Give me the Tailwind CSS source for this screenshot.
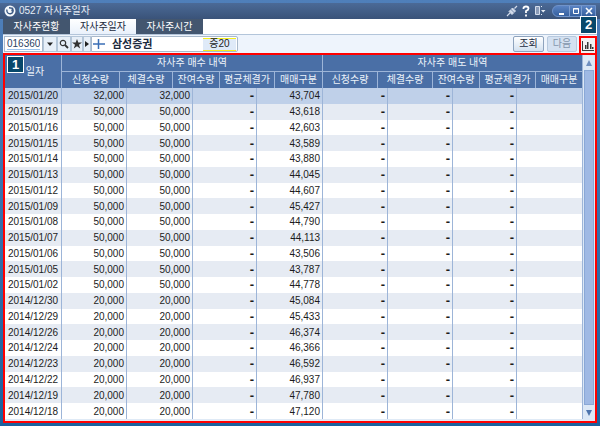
<!DOCTYPE html>
<html lang="ko">
<head>
    <meta charset="UTF-8">
    <meta name="viewport" content="width=device-width, initial-scale=1.0">
    <title>0527 자사주일자</title>
    <script src="https://cdn.jsdelivr.net/npm/@tailwindcss/browser@4"></script>
    <style>
        body { font-family: 'Liberation Sans', 'Noto Sans CJK KR', sans-serif; }
    </style>
</head>
<body class="min-h-screen flex flex-col bg-linear-to-b from-[#4f7fba] to-[#1b629e] text-[10px] leading-4 text-[#1c1c1c]">
    <header class="mt-[3px] h-4 px-1 flex items-center bg-linear-to-b from-[#4b6a97] to-[#3a5379] text-white">
        <svg class="w-3 h-3 shrink-0" viewBox="0 0 12 12" fill="none">
            <circle cx="6" cy="6" r="5.5" fill="#f4f8fc"/>
            <path d="M3 4.5A3.2 3.2 0 1 0 8.5 3.6M5 2.8l3.6.6-.8 3" stroke="#3d5b86" stroke-width="1.4"/>
        </svg>
        <h1 class="ml-[3px] text-[#e6edf6]">0527 자사주일자</h1>
        <div class="ml-auto flex items-center">
            <button type="button" aria-label="연결" class="w-3 h-3">
                <svg class="w-3 h-3" viewBox="0 0 12 12" fill="none" stroke="#d3dceb">
                    <path d="M1 11l3-3M8.500 3.500L11 1" stroke-width="1.200"/>
                    <path d="M3 6.500l3.500-3.500 3 3-3.500 3.500z" fill="#d3dceb"/>
                    <path d="M4 3.500l5 5" stroke="#5d7499" stroke-width=".8"/>
                </svg>
            </button>
            <button type="button" aria-label="도움말" class="ml-1 w-2 h-3">
                <svg class="w-2 h-3" viewBox="0 0 8 12" fill="none" stroke="#fff" stroke-width="1.800"><path d="M1.500 4V3.200Q1.500 1.500 4 1.500T6.500 3.500Q6.500 5 4 6v2M4 9.500v2"/></svg>
            </button>
            <button type="button" aria-label="화면 메뉴" class="ml-1 w-3 h-3">
                <svg class="w-3 h-3" viewBox="0 0 12 12"><path d="M1.500 1.500h4v8h-4z" fill="#8a9bb8" stroke="#d3dceb"/><path d="M7 1h1v1H7zM7 9h1v1H7zM7 5h4.500L9.200 7.500z" fill="#e6edf6"/></svg>
            </button>
            <div class="ml-1.5 h-3 flex rounded-l-full overflow-hidden border border-[#6f93cb] bg-linear-to-b from-[#5a83c3] to-[#36609f]">
                <button type="button" aria-label="최소화" class="w-4 flex justify-center"><svg class="w-2.5 h-2.5" viewBox="0 0 10 10"><path d="M3 7h5v2H3z" fill="#fff"/></svg></button>
                <button type="button" aria-label="최대화" class="w-3 flex justify-center border-l border-[#7f9fd0]"><svg class="w-2.5 h-2.5" viewBox="0 0 10 10" fill="none" stroke="#fff"><path d="M2.500 2.500h5v5h-5zM2 3h6"/></svg></button>
                <button type="button" aria-label="닫기" class="w-3.5 flex justify-center border-l border-[#7f9fd0]"><svg class="w-2.5 h-2.5" viewBox="0 0 10 10" fill="none" stroke="#fff" stroke-width="1.600"><path d="M2 2l6 6M8 2l-6 6"/></svg></button>
            </div>
        </div>
    </header>

    <div class="mx-[3px] mb-[3px] flex-1 flex flex-col bg-[#eef4fc]">
        <nav class="relative h-4 flex bg-white border-b border-[#b3c5da] text-white">
            <a href="#" class="w-[67px] flex items-center justify-center bg-[#43566f]">자사주현황</a>
            <a href="#" class="w-[66px] flex items-center justify-center bg-linear-to-b from-white to-[#e9f1fb] text-[#1c2a3d]">자사주일자</a>
            <a href="#" class="w-[67px] flex items-center justify-center bg-[#43566f]">자사주시간</a>
            <span class="absolute z-10 right-0 -top-[3px] w-[17px] h-[18px] flex items-center justify-center border border-white bg-[#07486b] text-[13px] font-bold">2</span>
        </nav>

        <div class="h-[18px] pt-px pl-px flex items-stretch">
            <input type="text" aria-label="종목코드" value="016360" class="w-[39px] mb-px px-0.5 border border-[#a9b9cb] bg-white text-[10px] text-[#2d4463] underline decoration-[#9cc4ee] underline-offset-2">
            <button type="button" aria-label="종목 목록" class="w-3.5 mb-px flex items-center justify-center border border-[#b4c6d9] bg-[#e7eff8]"><svg class="w-2 h-2" viewBox="0 0 8 8"><path d="M1 2.500h6L4 6z" fill="#222"/></svg></button>
            <button type="button" aria-label="종목 검색" class="w-3.5 mb-px flex items-center justify-center border border-[#b4c6d9] bg-[#e7eff8]"><svg class="w-2.5 h-2.5" viewBox="0 0 10 10" fill="none" stroke="#333"><circle cx="4" cy="4" r="2.700" stroke-width="1.200"/><path d="M6 6l3 3" stroke-width="1.800"/></svg></button>
            <button type="button" aria-label="관심종목" class="w-3 mb-px flex items-center justify-center border border-[#b4c6d9] bg-[#e7eff8]"><svg class="w-2.5 h-2.5 shrink-0" viewBox="0 0 10 10"><path d="M5 0l1.300 3.500H10L7 5.800 8.200 9.500 5 7.300 1.800 9.500 3 5.800 0 3.500h3.700z" fill="#333"/></svg></button>
            <button type="button" aria-label="더보기" class="w-2 mb-px flex items-center justify-center border border-[#b4c6d9] bg-[#e7eff8]"><svg class="w-1 h-1.5 shrink-0" viewBox="0 0 4 6"><path d="M0 0l4 3-4 3z" fill="#222"/></svg></button>
            <div class="w-[147px] mb-px flex items-center border border-[#a9b9cb] rounded-r-xs bg-white">
                <svg class="ml-px w-3 h-3 shrink-0" viewBox="0 0 12 12" stroke="#3b6fb6" stroke-width="1.500"><path d="M0 6h12M5.500 1v10"/></svg>
                <strong class="ml-[7px] text-[11px] font-bold text-[#1c2a3d]">삼성증권</strong>
                <span class="ml-auto mr-px w-[33px] h-[13px] flex items-center justify-center border-y border-[#f4ee1c] bg-[#dfeaf8]">증20</span>
            </div>
            <button type="button" class="ml-auto mb-px w-[31px] flex items-center justify-center rounded-xs border border-[#8ea3bd] bg-linear-to-b from-white to-[#d3e1f0] text-[#1c2a3d]">조회</button>
            <button type="button" disabled class="ml-[3px] mb-px w-[30px] flex items-center justify-center rounded-xs border border-[#b7c9de] bg-[#d4e1f1] text-[#8597ad]">다음</button>
            <button type="button" aria-label="차트" class="ml-0.5 w-[18px] flex items-center justify-center border-2 border-b-0 border-[#f00] bg-[#f0f1f2]">
                <svg class="w-3 h-3 shrink-0" viewBox="0 0 12 12"><path d="M0 1h1v9h11v1H0zM3 5h1.500v4H3zM5 2h1.500v7H5zM8 4h1.500v5H8zM10 7h1.500v2H10z" fill="#383838"/></svg>
            </button>
        </div>

        <main class="relative flex-1 flex border-2 border-[#f00] bg-[#dfeaf6]">
            <div class="flex-1 flex flex-col">
                <table class="w-full h-[33px] table-fixed border-separate border-spacing-0 bg-[#4a6fa6] text-[#edf3fa]">
                    <colgroup>
                        <col class="w-[57px]"><col class="w-[58px]"><col class="w-[53px]"><col class="w-[47px]"><col class="w-[55px]"><col class="w-[48px]">
                        <col class="w-[55px]"><col class="w-[55px]"><col class="w-[47px]"><col class="w-[56px]"><col class="w-[47px]">
                    </colgroup>
                    <thead>
                        <tr class="[&>th]:p-0 [&>th]:font-normal [&>th]:leading-[15px] [&>th]:border-r [&>th]:border-[#9db5d8]">
                            <th scope="col" rowspan="2" class="pl-1!">일자</th>
                            <th scope="colgroup" colspan="5" class="border-b">자사주 매수 내역</th>
                            <th scope="colgroup" colspan="5" class="border-b">자사주 매도 내역</th>
                        </tr>
                        <tr class="[&>th]:p-0 [&>th]:font-normal [&>th]:border-r [&>th]:border-[#9db5d8] whitespace-nowrap">
                            <th scope="col">신청수량</th>
                            <th scope="col">체결수량</th>
                            <th scope="col">잔여수량</th>
                            <th scope="col">평균체결가</th>
                            <th scope="col">매매구분</th>
                            <th scope="col">신청수량</th>
                            <th scope="col">체결수량</th>
                            <th scope="col">잔여수량</th>
                            <th scope="col">평균체결가</th>
                            <th scope="col">매매구분</th>
                        </tr>
                    </thead>
                </table>
                <table class="w-full h-[331px] table-fixed border-separate border-spacing-0 text-[10px] leading-[15px] text-right">
                    <colgroup>
                        <col class="w-[57px]"><col class="w-[65px]"><col class="w-[66px]"><col class="w-[64px]"><col class="w-[66px]">
                        <col class="w-[65px]"><col class="w-[65px]"><col class="w-[64px]"><col class="w-[66px]">
                    </colgroup>
                    <tbody id="rows"></tbody>
                </table>
            </div>
            <div class="w-[13px] flex flex-col bg-[#dce8f6]">
                <button type="button" aria-label="위로" class="h-[15px] flex items-center justify-center"><svg class="w-1.5 h-1.5" viewBox="0 0 6 6"><path d="M3 0l3 6H0z" fill="#6f8fc0"/></svg></button>
                <div class="mx-px flex-1 border border-[#8aa8d6] bg-[#9fb9e4]"></div>
                <button type="button" aria-label="아래로" class="h-4 flex items-center justify-center"><svg class="w-1.5 h-1.5" viewBox="0 0 6 6"><path d="M0 0h6L3 6z" fill="#4d74ad"/></svg></button>
            </div>
            <span class="absolute left-0.5 top-px w-[17px] h-[17px] flex items-center justify-center border border-white bg-[#07486b] text-[13px] font-bold text-white">1</span>
        </main>
    </div>

    <script>
        const data = [
            ['2015/01/20', '32,000', '43,704'],
            ['2015/01/19', '50,000', '43,618'],
            ['2015/01/16', '50,000', '42,603'],
            ['2015/01/15', '50,000', '43,589'],
            ['2015/01/14', '50,000', '43,880'],
            ['2015/01/13', '50,000', '44,045'],
            ['2015/01/12', '50,000', '44,607'],
            ['2015/01/09', '50,000', '45,427'],
            ['2015/01/08', '50,000', '44,790'],
            ['2015/01/07', '50,000', '44,113'],
            ['2015/01/06', '50,000', '43,506'],
            ['2015/01/05', '50,000', '43,787'],
            ['2015/01/02', '50,000', '44,778'],
            ['2014/12/30', '20,000', '45,084'],
            ['2014/12/29', '20,000', '45,433'],
            ['2014/12/26', '20,000', '46,374'],
            ['2014/12/24', '20,000', '46,366'],
            ['2014/12/23', '20,000', '46,592'],
            ['2014/12/22', '20,000', '46,937'],
            ['2014/12/19', '20,000', '47,780'],
            ['2014/12/18', '20,000', '47,120']
        ];
        const rows = document.getElementById('rows');

        data.forEach(([date, qty, price]) => {
            const tr = document.createElement('tr');
            // 첫 행은 선택된 행
            tr.className = 'bg-white even:bg-[#e6ebf3] first:bg-[#bfd0e9]';
            [date, qty, qty, '-', price, '-', '-', '-', ''].forEach((text, i) => {
                const td = document.createElement('td');
                td.className = i === 0
                    ? 'p-0 pl-[3px] text-left border-r border-[#9db5d8]'
                    : 'p-0 pr-[2px] border-r border-[#9db5d8]';
                if (text === '-') td.classList.add('font-bold', 'text-[13px]');
                td.textContent = text;
                tr.appendChild(td);
            });
            rows.appendChild(tr);
        });
    </script>
</body>
</html>
